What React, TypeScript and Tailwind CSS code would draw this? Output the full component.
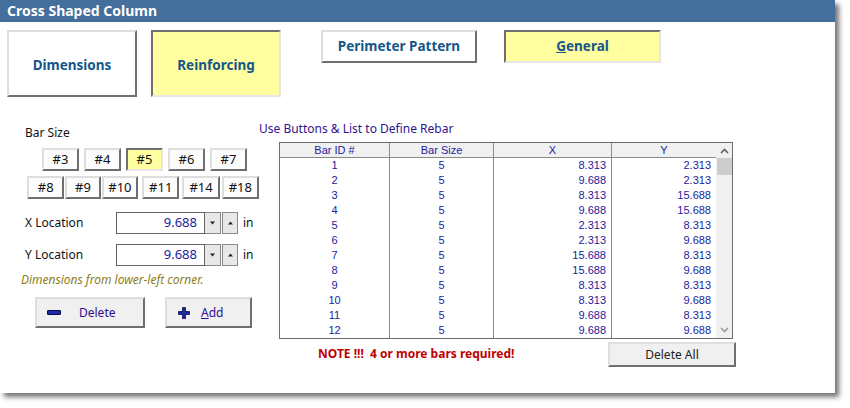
const rows: [number, number, string, string][] = [
  [1, 5, '8.313', '2.313'],
  [2, 5, '9.688', '2.313'],
  [3, 5, '8.313', '15.688'],
  [4, 5, '9.688', '15.688'],
  [5, 5, '2.313', '8.313'],
  [6, 5, '2.313', '9.688'],
  [7, 5, '15.688', '8.313'],
  [8, 5, '15.688', '9.688'],
  [9, 5, '8.313', '8.313'],
  [10, 5, '8.313', '9.688'],
  [11, 5, '9.688', '8.313'],
  [12, 5, '9.688', '9.688'],
]

const raised =
  'border-2 border-t-[#dedede] border-l-[#dedede] border-r-[#6f6f6f] border-b-[#6f6f6f]'
const pressed =
  'border-2 border-t-[#6f6f6f] border-l-[#6f6f6f] border-r-[#e6e6e6] border-b-[#e6e6e6]'

function SizeButton({ label, w, ml, active }: { label: string; w: number; ml: number; active?: boolean }) {
  return (
    <div
      style={{ width: w, marginLeft: ml }}
      className={`h-[23px] flex items-center justify-center text-[13px] text-[#111] ${
        active ? `${pressed} bg-[#ffffa0]` : `${raised} bg-[#fcfcfc]`
      }`}
    >
      {label}
    </div>
  )
}

function Spinner({ value }: { value: string }) {
  return (
    <div className="flex items-center h-[22px]">
      <div className="w-[89px] h-full border border-[#646464] bg-white flex items-center justify-end pr-[7px] text-[13px] text-[#1c1c9c]">
        {value}
      </div>
      <div className="w-[16px] h-full border border-[#8a8a8a] border-l-0 bg-[#e8e8e8] flex items-center justify-center">
        <svg width="7" height="4" viewBox="0 0 7 4">
          <path d="M1 0.5 L6 0.5 L3.5 3.5 Z" fill="#222" />
        </svg>
      </div>
      <div className="w-[16px] h-full ml-[1px] border border-[#8a8a8a] bg-[#e8e8e8] flex items-center justify-center">
        <svg width="7" height="4" viewBox="0 0 7 4">
          <path d="M1 3.5 L6 3.5 L3.5 0.5 Z" fill="#222" />
        </svg>
      </div>
      <span className="ml-[5px] text-[12px] text-[#111] leading-[16px]">in</span>
    </div>
  )
}

export default function App() {
  return (
    <div className="w-[850px] h-[408px] bg-white font-['Noto_Sans','Open_Sans',sans-serif]">
      <div className="w-[835px] h-[393px] bg-white flex flex-col shadow-[4px_4px_5px_rgba(0,0,0,0.55)]">
        <div className="h-[22px] bg-[#446e9b] text-white font-bold text-[14px] leading-[22px] pl-[7px]">
          Cross Shaped Column
        </div>

        <div className="flex items-start mt-[8px] pl-[7px]">
          <div className={`w-[130px] h-[67px] ${raised} bg-white flex items-center justify-center pt-[3px] font-bold text-[13.5px] text-[#15568a]`}>
            Dimensions
          </div>
          <div className={`w-[130px] h-[67px] ml-[14px] ${pressed} bg-[#ffffa0] flex items-center justify-center pt-[3px] font-bold text-[13.5px] text-[#15568a]`}>
            Reinforcing
          </div>
          <div className={`w-[156px] h-[33px] ml-[40px] ${raised} bg-white flex items-center justify-center font-bold text-[13.5px] text-[#15568a]`}>
            Perimeter Pattern
          </div>
          <div className={`w-[157px] h-[33px] ml-[27px] ${pressed} bg-[#ffffa0] flex items-center justify-center font-bold text-[13.5px] text-[#15568a]`}>
            <span>
              <span className="underline">G</span>eneral
            </span>
          </div>
        </div>

        <div className="flex">
          {/* left column */}
          <div className="w-[259px] flex flex-col">
            <div className="mt-[28px] ml-[25px] text-[12px] leading-[16px] text-[#111]">Bar Size</div>
            <div className="flex mt-[7px]">
              <SizeButton label="#3" w={37} ml={42} />
              <SizeButton label="#4" w={37} ml={5} />
              <SizeButton label="#5" w={37} ml={5} active />
              <SizeButton label="#6" w={37} ml={5} />
              <SizeButton label="#7" w={37} ml={5} />
            </div>
            <div className="flex mt-[5px]">
              <SizeButton label="#8" w={39} ml={27} />
              <SizeButton label="#9" w={37} ml={1} />
              <SizeButton label="#10" w={38} ml={1} />
              <SizeButton label="#11" w={39} ml={4} />
              <SizeButton label="#14" w={39} ml={3} />
              <SizeButton label="#18" w={39} ml={2} />
            </div>
            <div className="flex items-center mt-[13px]">
              <span className="ml-[25px] w-[91px] text-[12px] text-[#111]">X Location</span>
              <Spinner value="9.688" />
            </div>
            <div className="flex items-center mt-[10px]">
              <span className="ml-[25px] w-[91px] text-[12px] text-[#111]">Y Location</span>
              <Spinner value="9.688" />
            </div>
            <div className="mt-[6px] ml-[21px] italic text-[12px] leading-[16px] text-[#8f7d17]">
              Dimensions from lower-left corner.
            </div>
            <div className="flex mt-[9px]">
              <div className={`ml-[35px] w-[110px] h-[31px] ${raised} bg-[#f0f0f0] flex items-center text-[12px] text-[#2e0f8e]`}>
                <span className="ml-[10px] w-[14px] h-[5px] bg-[#1a2aa8] border border-[#0a0a50] rounded-[1px]" />
                <span className="ml-[18px]">Delete</span>
              </div>
              <div className={`ml-[20px] w-[87px] h-[31px] ${raised} bg-[#f0f0f0] flex items-center text-[12px] text-[#2e0f8e]`}>
                <svg className="ml-[11px]" width="12" height="12" viewBox="0 0 12 12">
                  <path d="M4.5 0.5 H7.5 V4.5 H11.5 V7.5 H7.5 V11.5 H4.5 V7.5 H0.5 V4.5 H4.5 Z" fill="#1a2a9a" stroke="#0a0a50" strokeWidth="0.8" />
                </svg>
                <span className="ml-[11px]">
                  <span className="underline">A</span>dd
                </span>
              </div>
            </div>
          </div>

          {/* right column */}
          <div className="flex flex-col">
            <div className="mt-[24px] text-[12px] leading-[16px] text-[#2f1590]">
              Use Buttons &amp; List to Define Rebar
            </div>
            <div className="mt-[5px] ml-[20px] w-[454px] border border-[#6d6d6d] flex font-['Liberation_Sans',Arial,sans-serif] text-[11px] text-[#1c1c9c]">
              <div className="w-[436px] flex flex-col">
                <div className="grid grid-cols-[110px_104px_118px_104px] h-[15px] bg-[#f0f0f0] border-b border-[#8a8a8a] leading-[14px]">
                  <div className="text-center border-r border-[#8a8a8a]">Bar ID #</div>
                  <div className="text-center border-r border-[#8a8a8a]">Bar Size</div>
                  <div className="text-center border-r border-[#8a8a8a]">X</div>
                  <div className="text-center">Y</div>
                </div>
                <div className="grid grid-cols-[110px_104px_118px_104px]">
                  {rows.map(([id, size, x, y]) => (
                    <div key={id} className="contents">
                      <div className="h-[15px] leading-[15px] text-center border-r border-[#8a8a8a]">{id}</div>
                      <div className="h-[15px] leading-[15px] text-center border-r border-[#8a8a8a]">{size}</div>
                      <div className="h-[15px] leading-[15px] text-right pr-[5px] border-r border-[#8a8a8a]">{x}</div>
                      <div className="h-[15px] leading-[15px] text-right pr-[5px]">{y}</div>
                    </div>
                  ))}
                </div>
              </div>
              <div className="w-[16px] bg-[#f0f0f0] flex flex-col items-center">
                <svg className="mt-[5px]" width="9" height="6" viewBox="0 0 9 6">
                  <path d="M1 5 L4.5 1.5 L8 5" fill="none" stroke="#606060" strokeWidth="1.6" />
                </svg>
                <div className="mt-[4px] w-[15px] h-[17px] bg-[#cdcdcd]" />
                <div className="flex-1" />
                <svg className="mb-[5px]" width="9" height="6" viewBox="0 0 9 6">
                  <path d="M1 1 L4.5 4.5 L8 1" fill="none" stroke="#9a9a9a" strokeWidth="1.6" />
                </svg>
              </div>
            </div>
            <div className="flex items-start">
              <div className="ml-[59px] w-[290px] mt-[7px] font-bold text-[12px] leading-[16px] text-[#c00000] whitespace-pre">
                NOTE !!!  4 or more bars required!
              </div>
              <div className={`mt-[3px] w-[128px] h-[25px] ${raised} bg-[#f0f0f0] flex items-center justify-center text-[12px] text-[#222]`}>
                Delete All
              </div>
            </div>
          </div>
        </div>
      </div>
    </div>
  )
}
